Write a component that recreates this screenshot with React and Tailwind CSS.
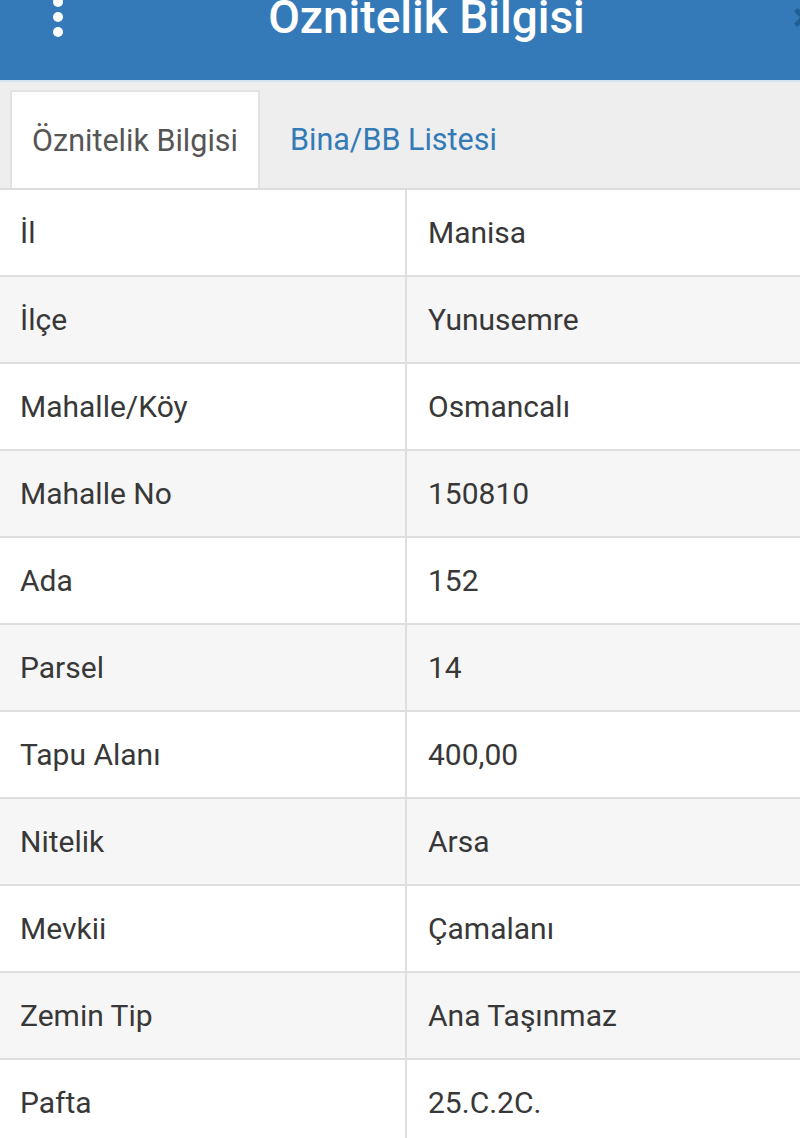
import React from "react";

const rows = [
  ["İl", "Manisa"],
  ["İlçe", "Yunusemre"],
  ["Mahalle/Köy", "Osmancalı"],
  ["Mahalle No", "150810"],
  ["Ada", "152"],
  ["Parsel", "14"],
  ["Tapu Alanı", "400,00"],
  ["Nitelik", "Arsa"],
  ["Mevkii", "Çamalanı"],
  ["Zemin Tip", "Ana Taşınmaz"],
  ["Pafta", "25.C.2C."],
];

export default function App() {
  return (
    <div
      className="w-[800px] h-[1138px] overflow-hidden bg-white text-[#383838]"
      style={{ fontFamily: "Roboto, 'Noto Sans', sans-serif" }}
    >
      <header className="relative h-[80px] bg-[#347ab8] border-b-2 border-[#d6e4f0] box-content overflow-hidden">
        <div className="absolute left-[53px] top-[-3px] flex flex-col gap-[5px]">
          <span className="block w-[10px] h-[10px] rounded-full bg-white"></span>
          <span className="block w-[10px] h-[10px] rounded-full bg-white"></span>
          <span className="block w-[10px] h-[10px] rounded-full bg-white"></span>
        </div>
        <div className="flex justify-center">
          <h1 className="mt-[-6px] ml-[53px] text-[46px] leading-none font-medium text-white">
            Öznitelik Bilgisi
          </h1>
        </div>
        <span className="absolute right-[-14px] top-[-2px] text-[40px] leading-none text-[#1f5f96] font-bold">
          ×
        </span>
      </header>

      <nav className="h-[106px] bg-[#eeeeee] border-b-2 border-[#dcdcdc] box-content flex items-end pl-[10px]">
        <div className="w-[250px] h-[98px] bg-white border-2 border-b-0 border-[#e2e2e2] flex items-center justify-center pt-[2px]">
          <span className="text-[30.5px] text-[#555555]">Öznitelik Bilgisi</span>
        </div>
        <div className="h-[98px] flex items-center pl-[30px] pt-[2px]">
          <span className="text-[30.5px] text-[#337ab7]">Bina/BB Listesi</span>
        </div>
      </nav>

      <div>
        {rows.map(([k, v], i) => (
          <div
            key={k}
            className={
              "flex h-[87px] border-b-2 border-[#dedede] " +
              (i % 2 === 1 ? "bg-[#f6f6f6]" : "bg-white")
            }
          >
            <div className="w-[407px] border-r-2 border-[#dedede] flex items-center pl-[20px] text-[30px]">
              {k}
            </div>
            <div className="flex-1 flex items-center pl-[21px] text-[30px]">
              {v}
            </div>
          </div>
        ))}
      </div>
    </div>
  );
}
